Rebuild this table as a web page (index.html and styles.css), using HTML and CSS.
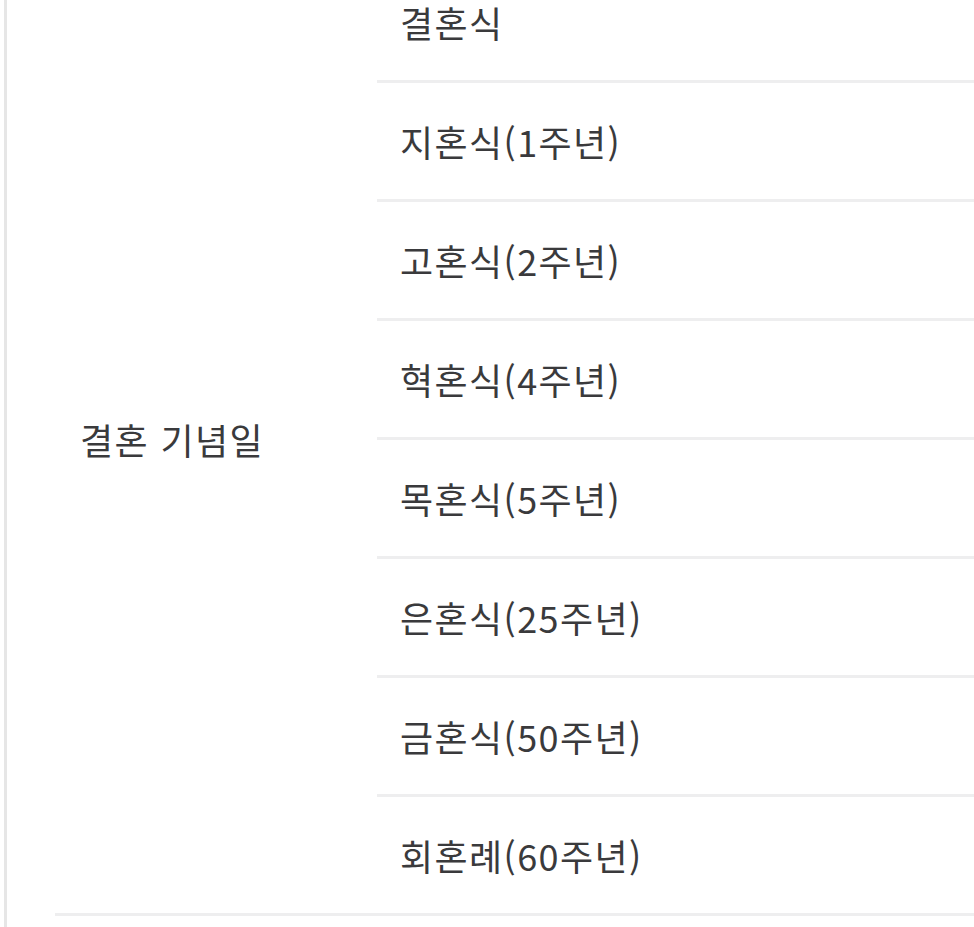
FILE: index.html
```html
<!DOCTYPE html>
<html lang="ko">
<head>
<meta charset="utf-8">
<link rel="stylesheet" href="styles.css">
</head>
<body>
<div class="frame">
  <table class="anniv">
    <tbody>
      <tr><td class="group" rowspan="8">결혼 기념일</td><td class="item">결혼식</td></tr>
      <tr><td class="item">지혼식(1주년)</td></tr>
      <tr><td class="item">고혼식(2주년)</td></tr>
      <tr><td class="item">혁혼식(4주년)</td></tr>
      <tr><td class="item">목혼식(5주년)</td></tr>
      <tr><td class="item">은혼식(25주년)</td></tr>
      <tr><td class="item">금혼식(50주년)</td></tr>
      <tr><td class="item">회혼례(60주년)</td></tr>
    </tbody>
  </table>
</div>
</body>
</html>
```

FILE: styles.css
```css
html, body {
  margin: 0;
  padding: 0;
  background: #ffffff;
  overflow: hidden;
}
.frame {
  margin-left: 4px;
  border-left: 3px solid #e6e6e6;
  height: 927px;
  overflow: hidden;
}
.anniv {
  margin-top: -36px;
  margin-left: 48px;
  border-collapse: collapse;
  width: 1200px;
  font-family: "Noto Sans CJK KR", "Noto Sans", sans-serif;
  font-size: 36px;
  letter-spacing: 1.4px;
  color: #3a3a3c;
}
.anniv td {
  height: 116px;
  padding: 0;
  border-bottom: 3px solid #eeeeef;
  vertical-align: middle;
  line-height: 42px;
}
.group {
  width: 322px;
  padding-left: 25px !important;
  box-sizing: border-box;
}
.item {
  padding-left: 23px !important;
}
```
